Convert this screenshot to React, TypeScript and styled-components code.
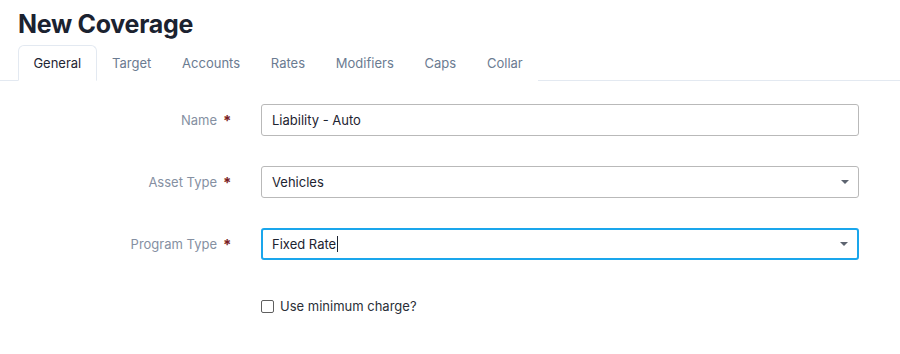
import styled, { createGlobalStyle } from "styled-components";

const Global = createGlobalStyle`
    body {
        margin: 0;
        background: #ffffff;
        font-family: Inter, "Noto Sans", sans-serif;
    }
`

const Page = styled.div`
    width: 900px;
    height: 354px;
    overflow: hidden;
`

const Title = styled.h1`
    margin: 0;
    padding: 8px 0 0 18px;
    height: 37px;
    box-sizing: border-box;
    font-size: 25px;
    line-height: 32px;
    font-weight: 700;
    color: #1b2230;
    letter-spacing: -0.3px;
`

const TabBar = styled.div`
    display: flex;
    margin-top: 8px;
    padding-left: 18px;
    border-bottom: 1px solid #e3e9f1;
    height: 35px;
`

const Tab = styled.div<{ $active?: boolean }>`
    display: flex;
    align-items: center;
    padding: 0 14.4px;
    margin-bottom: -1px;
    font-size: 13px;
    color: ${p => p.$active ? "#1f2633" : "#6b7b91"};
    background: #fff;
    border: 1px solid ${p => p.$active ? "#e3e9f1" : "transparent"};
    border-bottom-color: ${p => p.$active ? "#fff" : "transparent"};
    border-radius: 6px 6px 0 0;
`

const Form = styled.div`
    display: flex;
    flex-direction: column;
    padding-top: 23px;
    row-gap: 30px;
`

const Row = styled.div`
    display: flex;
    align-items: center;
`

const Label = styled.div`
    width: 217px;
    text-align: right;
    font-size: 13px;
    color: #8590a2;
`

const Star = styled.div`
    width: 44px;
    box-sizing: border-box;
    padding-left: 6px;
    font-size: 15px;
    font-weight: 700;
    color: #7a1c22;
`

const Field = styled.div<{ $focus?: boolean }>`
    position: relative;
    width: 598px;
    height: 32px;
    box-sizing: border-box;
    display: flex;
    align-items: center;
    padding-left: ${p => p.$focus ? "9px" : "10px"};
    border: ${p => p.$focus ? "2px solid #1aa6ec" : "1px solid #b9b9b9"};
    border-radius: 3px;
    font-size: 13px;
    color: #1d2330;
`

const Caret = styled.span`
    position: absolute;
    right: 9px;
    top: 50%;
    margin-top: -2px;
    width: 0;
    height: 0;
    border-left: 4px solid transparent;
    border-right: 4px solid transparent;
    border-top: 4px solid #5d6470;
`

const Cursor = styled.span`
    display: inline-block;
    width: 1px;
    height: 16px;
    background: #1d2330;
    margin-left: 1px;
`

const CheckRow = styled.label`
    display: flex;
    align-items: center;
    margin-left: 261px;
    margin-top: 8px;
    gap: 6px;
    font-size: 13px;
    color: #2a2f38;
`

const Box = styled.span`
    width: 13px;
    height: 13px;
    box-sizing: border-box;
    border: 1px solid #5f5f5f;
    border-radius: 2px;
`

const tabs = ["General", "Target", "Accounts", "Rates", "Modifiers", "Caps", "Collar"]

function App() {
    return (
        <Page>
            <Global />
            <Title>New Coverage</Title>
            <TabBar>
                {tabs.map((t, i) => <Tab key={t} $active={i === 0}>{t}</Tab>)}
            </TabBar>
            <Form>
                <Row>
                    <Label>Name</Label>
                    <Star>*</Star>
                    <Field>Liability - Auto</Field>
                </Row>
                <Row>
                    <Label>Asset Type</Label>
                    <Star>*</Star>
                    <Field>Vehicles<Caret /></Field>
                </Row>
                <Row>
                    <Label>Program Type</Label>
                    <Star>*</Star>
                    <Field $focus>Fixed Rate<Cursor /><Caret /></Field>
                </Row>
                <CheckRow>
                    <Box />
                    Use minimum charge?
                </CheckRow>
            </Form>
        </Page>
    )
}

export default App;
